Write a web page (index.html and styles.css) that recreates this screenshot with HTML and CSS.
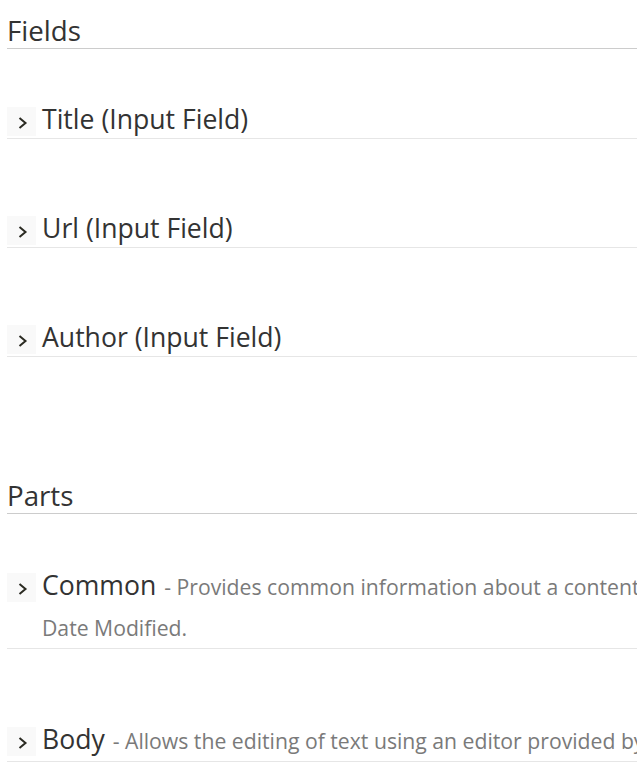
FILE: index.html
```html
<!DOCTYPE html>
<html lang="en">
<head>
<meta charset="utf-8">
<title>Content Type</title>
<link rel="stylesheet" href="styles.css">
</head>
<body>
<div class="page">
  <section class="group">
    <h2 class="group-title">Fields</h2>
    <div class="item">
      <h3 class="item-head"><span class="toggle"><svg width="29" height="29" viewBox="0 0 29 29"><polyline points="12.5,11 18.5,16 12.5,21" /></svg></span>Title (Input Field)</h3>
      <div class="item-body"></div>
    </div>
    <div class="item">
      <h3 class="item-head"><span class="toggle"><svg width="29" height="29" viewBox="0 0 29 29"><polyline points="12.5,11 18.5,16 12.5,21" /></svg></span>Url (Input Field)</h3>
      <div class="item-body"></div>
    </div>
    <div class="item">
      <h3 class="item-head"><span class="toggle"><svg width="29" height="29" viewBox="0 0 29 29"><polyline points="12.5,11 18.5,16 12.5,21" /></svg></span>Author (Input Field)</h3>
      <div class="item-body"></div>
    </div>
  </section>
  <section class="group group-parts">
    <h2 class="group-title">Parts</h2>
    <div class="item">
      <h3 class="item-head"><span class="toggle"><svg width="29" height="29" viewBox="0 0 29 29"><polyline points="12.5,11 18.5,16 12.5,21" /></svg></span>Common <span class="hint">- Provides common information about a content item, such as Owner, Date Created, Date Published and Date Modified.</span></h3>
      <div class="item-body"></div>
    </div>
    <div class="item">
      <h3 class="item-head"><span class="toggle"><svg width="29" height="29" viewBox="0 0 29 29"><polyline points="12.5,11 18.5,16 12.5,21" /></svg></span>Body <span class="hint">- Allows the editing of text using an editor provided by the configured flavor (e.g. html, text, markdown).</span></h3>
      <div class="item-body"></div>
    </div>
  </section>
</div>
</body>
</html>
```
FILE: styles.css
```css
html {
  overflow: hidden;
}
body {
  margin: 0;
  background: #fff;
  color: #333;
  font-family: "Open Sans", "Noto Sans", sans-serif;
}
.page {
  width: 1225px;
  padding: 12px 0 0 7px;
}
.group + .group {
  margin-top: 101px;
}
.group-title {
  margin: 0;
  font-size: 27.7px;
  font-weight: normal;
  line-height: 36px;
  border-bottom: 1px solid #cccccc;
}
.item {
  margin-top: 49px;
}
.group-parts .item {
  margin-top: 50px;
}
.item-head {
  margin: 0;
  padding: 2px 0 0 35px;
  font-size: 26.6px;
  font-weight: normal;
  line-height: 38px;
  border-bottom: 1px solid #e6e6e6;
}
.toggle {
  display: inline-block;
  width: 29px;
  height: 29px;
  margin-left: -35px;
  margin-right: 6px;
  vertical-align: -7px;
  background: #f9f9f9;
}
.toggle svg {
  display: block;
  fill: none;
  stroke: #2b2b22;
  stroke-width: 2;
}
.item-body {
  height: 19px;
}
.hint {
  margin-left: 1px;
  font-size: 21.2px;
  line-height: 41px;
  color: #7a7a7a;
}
```
